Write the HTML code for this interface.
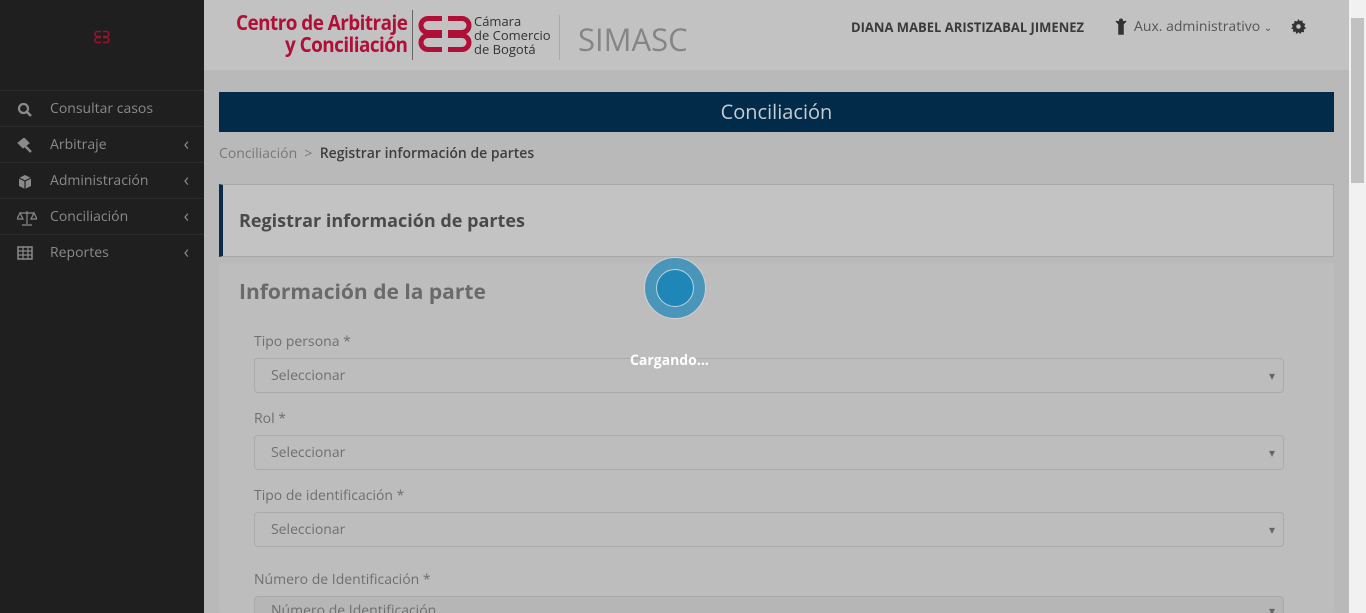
<!DOCTYPE html>
<html><head><meta charset="utf-8"><style>
*{box-sizing:border-box;margin:0;padding:0}
html,body{width:1366px;height:613px;overflow:hidden}
body{font-family:"Open Sans","Liberation Sans",sans-serif;background:#b9b9b9;position:relative}
.side{position:absolute;left:0;top:0;width:204px;height:613px;background:#1f1f1f}
.side .item{position:absolute;left:0;width:204px;height:36px;border-top:1px solid #2a2a2a;color:#8a8a8a;font-size:14px;line-height:36px;padding-left:50px}
.side .item .ch{position:absolute;right:15px;top:-1px;font-size:18px}
.side svg{position:absolute;left:17px;top:11px}
.top{position:absolute;left:204px;top:0;width:1145px;height:70px;background:#c2c2c2}
.scroll{position:absolute;left:1349px;top:0;width:17px;height:613px;background:#f1f1f1}
.thumb{position:absolute;left:1351px;top:18px;width:13px;height:165px;background:#c1c1c1}
.banner{position:absolute;left:219px;top:92px;width:1115px;height:40px;background:#022b4a;color:#c6cdd3;font-size:20px;text-align:center;line-height:40px}
.crumb{position:absolute;left:219px;top:144px;font-size:14px;color:#777}
.crumb b{color:#3e3e3e;font-weight:600}
.head{position:absolute;left:219px;top:184px;width:1115px;height:73px;background:#c3c3c3;border:1px solid #a9a9a9;border-left:4px solid #0a2c4a}
.head div{position:absolute;left:16px;top:24px;font-size:18px;font-weight:bold;color:#4a4a4a}
.card{position:absolute;left:219px;top:263px;width:1115px;height:350px;background:#bdbdbd;border-radius:3px}
.h2{position:absolute;left:239px;top:278px;font-size:21px;font-weight:bold;color:#6a6a6a}
.lbl{position:absolute;left:254px;font-size:14px;color:#6f6f6f}
.sel{position:absolute;left:254px;width:1030px;height:35px;border:1px solid #aaa;border-radius:4px;background:#bdbdbd;font-size:14px;color:#6f6f6f;padding-left:16px;line-height:33px}
.sel:after{content:"▾";position:absolute;right:8px;top:0;font-size:12px;color:#666}
</style></head><body>
<div class="side">
<svg style="left:93px;top:30px" width="18" height="14" viewBox="0 0 18 14"><g fill="none" stroke="#9b1230" stroke-width="1.6"><path d="M8 1.5H4.5a2.5 2.5 0 0 0 0 5H8M10 1.5h3.5a2.5 2.5 0 0 1 0 5H10M8 7.5H4.5a2.5 2.5 0 0 0 0 5H8M10 7.5h3.5a2.5 2.5 0 0 1 0 5H10"/></g></svg>
<div class="item" style="top:90px"><svg width="16" height="16" viewBox="0 0 16 16"><circle cx="6.5" cy="6.5" r="4.5" fill="none" stroke="#8a8a8a" stroke-width="2.2"/><path d="M10 10l4 4" stroke="#8a8a8a" stroke-width="2.6"/></svg>Consultar casos</div>
<div class="item" style="top:126px"><svg width="16" height="16" viewBox="0 0 16 16"><path d="M2 5l5-4 4 4-5 4z M8 8l6 6" fill="#8a8a8a" stroke="#8a8a8a" stroke-width="2.4"/></svg>Arbitraje<span class="ch">‹</span></div>
<div class="item" style="top:162px"><svg width="16" height="16" viewBox="0 0 16 16"><path d="M8 1l6 3v8l-6 3-6-3V4z" fill="#8a8a8a"/><path d="M2 4l6 3 6-3M8 7v8" stroke="#1f1f1f" stroke-width="1.2" fill="none"/></svg>Administración<span class="ch">‹</span></div>
<div class="item" style="top:198px"><svg width="20" height="16" viewBox="0 0 20 16"><path d="M10 1v13M3 3h14M3 3l-3 6h6zM17 3l-3 6h6zM5 15h10" stroke="#8a8a8a" fill="none" stroke-width="1.2"/></svg>Conciliación<span class="ch">‹</span></div>
<div class="item" style="top:234px"><svg width="16" height="14" viewBox="0 0 16 14"><rect x="1" y="1" width="14" height="12" fill="none" stroke="#8a8a8a" stroke-width="1.5"/><path d="M1 5h14M1 9h14M6 1v12M11 1v12" stroke="#8a8a8a" stroke-width="1.2"/></svg>Reportes<span class="ch">‹</span></div>
</div>
<div class="top">
<div style="position:absolute;right:942px;top:12px;color:#b01038;font-size:21px;line-height:22px;text-align:right;white-space:nowrap;letter-spacing:-0.6px;font-weight:bold;transform:scaleX(0.9);transform-origin:right">Centro de Arbitraje<br>y Conciliación</div>
<div style="position:absolute;left:208px;top:10px;width:1px;height:50px;background:#666"></div>
<svg style="position:absolute;left:214px;top:14px" width="54" height="40" viewBox="0 0 54 40"><g fill="none" stroke="#b01038" stroke-width="5"><path d="M24 4.5H10a7 7 0 0 0 0 14h14M30 4.5h14a7 7 0 0 1 0 14H30M24 21.5H10a7 7 0 0 0 0 14h14M30 21.5h14a7 7 0 0 1 0 14H30"/></g></svg>
<div style="position:absolute;left:270px;top:14px;font-size:13px;line-height:14px;color:#333">Cámara<br>de Comercio<br>de Bogotá</div>
<div style="position:absolute;left:355px;top:15px;width:1px;height:45px;background:#aaa"></div>
<div style="position:absolute;left:374px;top:19px;font-size:31px;color:#858585">SIMASC</div>
<div style="position:absolute;left:647px;top:18px;font-size:13px;font-weight:bold;color:#3a3a3a">DIANA MABEL ARISTIZABAL JIMENEZ</div>
<svg style="position:absolute;left:911px;top:18px" width="12" height="17" viewBox="0 0 12 17"><circle cx="6" cy="2.5" r="2" fill="#333"/><path d="M1 3l3 3v10h4V6l3-3" fill="#333" stroke="#333" stroke-width="1.5"/></svg>
<div style="position:absolute;left:930px;top:17px;font-size:14px;color:#555">Aux. administrativo <span style="font-size:10px">&#8964;</span></div>
<svg style="position:absolute;left:1087px;top:19px" width="15" height="15" viewBox="0 0 16 16"><path d="M8 0l1.5 2.3 2.7-.8.4 2.8 2.7.9-1.2 2.6 1.9 2-2.4 1.5.4 2.8-2.8-.2L10 16 8 14l-2 2-1.2-2.6-2.8.2.4-2.8L0 10.2l1.9-2L.7 5.6l2.7-.9.4-2.8 2.7.8z" fill="#333"/><circle cx="8" cy="8" r="2.4" fill="#c2c2c2"/></svg>
</div>
<div class="banner">Conciliación</div>
<div class="crumb">Conciliación &nbsp;&gt;&nbsp; <b>Registrar información de partes</b></div>
<div class="head"><div>Registrar información de partes</div></div>
<div class="card"></div>
<div class="h2">Información de la parte</div>
<div class="lbl" style="top:332px">Tipo persona *</div>
<div class="sel" style="top:358px">Seleccionar</div>
<div class="lbl" style="top:409px">Rol *</div>
<div class="sel" style="top:435px">Seleccionar</div>
<div class="lbl" style="top:486px">Tipo de identificación *</div>
<div class="sel" style="top:512px">Seleccionar</div>
<div class="lbl" style="top:570px">Número de Identificación *</div>
<div class="sel" style="top:596px;background:#b6b6b6;line-height:27px">Número de Identificación</div>
<div style="position:absolute;left:644px;top:257px;width:62px;height:62px;border-radius:50%;background:#4a95ba;border:1px solid #d0d0d0"></div>
<div style="position:absolute;left:656px;top:269px;width:38px;height:38px;border-radius:50%;background:#1f86b8;border:1px solid #b8d4e2"></div>
<div style="position:absolute;left:630px;top:351px;font-size:14px;font-weight:bold;color:#fff">Cargando...</div>
<div class="scroll"></div><div class="thumb"></div>
</body></html>
